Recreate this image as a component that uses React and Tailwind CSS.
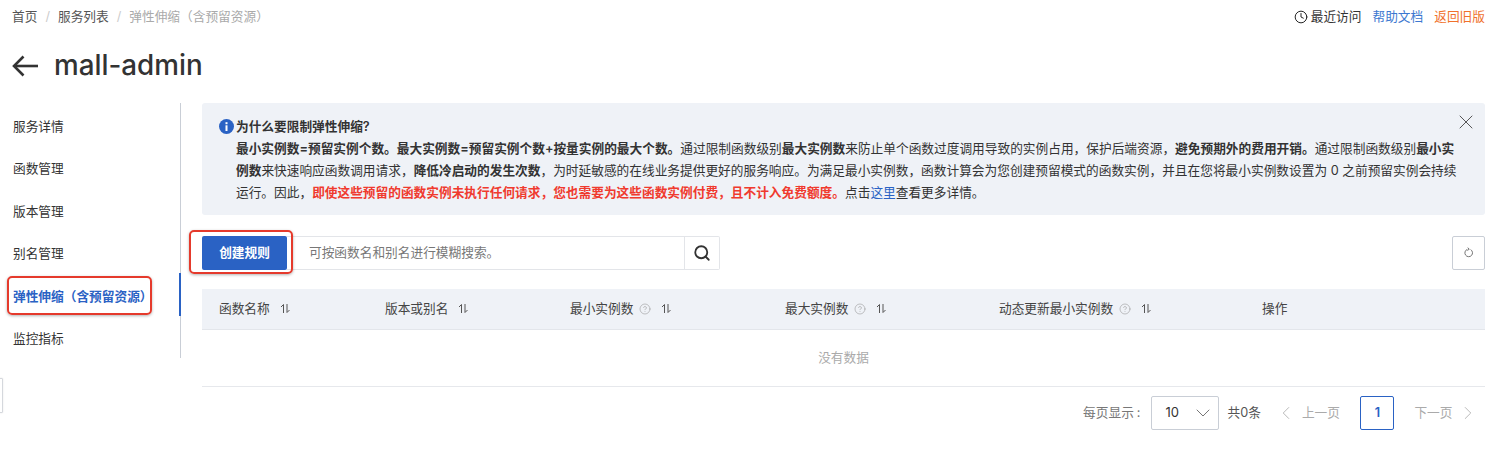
import React from "react";
import { ChevronDown, ChevronLeft, ChevronRight, Clock, Search, X, CircleHelp } from "lucide-react";

function Sort() {
  return (
    <svg width="11" height="11" viewBox="0 0 11 11" fill="none" stroke="#555" strokeWidth="1" className="shrink-0">
      <path d="M3.5 10V1.5L1 4" />
      <path d="M7 1v8.5L9.5 7" />
    </svg>
  );
}

function Refresh() {
  return (
    <svg width="10" height="11" viewBox="0 0 10 11" fill="none" stroke="#666" strokeWidth="0.9" className="-mt-[1px]">
      <path d="M6.6 2.6a3.8 3.8 0 1 1-3.400 -.2" />
      <path d="M3.800 .6 5.200 2.300 3.200 3.400" />
    </svg>
  );
}

function Info() {
  return (
    <svg width="15" height="15" viewBox="0 0 15 15" className="shrink-0">
      <circle cx="7.5" cy="7.5" r="7.5" fill="#2a62c4" />
      <rect x="6.5" y="6.3" width="2" height="5.7" fill="#fff" />
      <rect x="6.5" y="3.2" width="2" height="2" fill="#fff" />
    </svg>
  );
}

function BackArrow() {
  return (
    <svg width="26" height="22" viewBox="0 0 26 22" fill="none" stroke="#333" strokeWidth="2.6" className="shrink-0">
      <path d="M2 11h24" />
      <path d="M11.5 1.500 2 11l9.500 9.500" />
    </svg>
  );
}

const nav = [
  "服务详情",
  "函数管理",
  "版本管理",
  "别名管理",
  "弹性伸缩\uFF08含预留资源\uFF09",
  "监控指标",
];

const cols = [
  { t: "函数名称", sort: true },
  { t: "版本或别名", sort: true },
  { t: "最小实例数", help: true, sort: true },
  { t: "最大实例数", help: true, sort: true },
  { t: "动态更新最小实例数", help: true, sort: true },
  { t: "操作" },
];

export default function App() {
  return (
    <div className="relative h-[470px] w-[1500px] overflow-hidden bg-white text-[12.7px] text-[#333] font-['Inter','Noto_Sans_CJK_SC',sans-serif]">
      {/* top bar */}
      <div className="flex h-[34px] items-center justify-between pl-[12px] pr-[15px]">
        <div className="flex items-center text-[#555]">
          <span>首页</span>
          <span className="mx-[8px] text-[#ccc]">/</span>
          <span>服务列表</span>
          <span className="mx-[8px] text-[#ccc]">/</span>
          <span className="text-[#aaa]">{"弹性伸缩\uFF08含预留资源\uFF09"}</span>
        </div>
        <div className="flex items-center">
          <Clock size={14} strokeWidth={1.7} className="mr-[3px] text-[#222]" />
          <span className="mr-[11px] text-[#333]">最近访问</span>
          <span className="mr-[11px] text-[#3c78d0]">帮助文档</span>
          <span className="text-[#f0712c]">返回旧版</span>
        </div>
      </div>

      {/* title */}
      <div className="flex h-[64px] items-center pl-[12px]">
        <BackArrow />
        <h1 className="ml-[16px] text-[27.8px] font-medium leading-none text-[#333]">mall-admin</h1>
      </div>

      <div className="mt-[5px] flex items-start">
        {/* sidebar */}
        <nav className="w-[181px] shrink-0 border-r border-[#c9ced6]">
          <ul className="flex flex-col">
            {nav.map((n, i) => (
              <li
                key={n}
                className={
                  "relative flex h-[42.5px] items-center pl-[13px] pt-[4px] " +
                  (i === 4 ? "font-semibold text-[#2a62c4]" : "text-[#333]")
                }
              >
                {n}
                {i === 4 && (
                  <>
                    <span className="absolute right-[-1px] top-0 h-[43px] w-[2px] bg-[#2a62c4]" />
                    <span className="absolute left-[6.5px] top-[3px] h-[39px] w-[145px] rounded-[5px] border-[2.5px] border-[#e53a2c] shadow-[0_1px_3px_rgba(0,0,0,0.3)]" />
                  </>
                )}
              </li>
            ))}
          </ul>
        </nav>

        {/* main */}
        <main className="ml-[21px] w-[1283px]">
          {/* alert */}
          <div className="relative h-[112px] rounded-[3px] bg-[#eff2f7] pl-[17px] pt-[13px]">
            <X size={24} strokeWidth={0.9} className="absolute right-[7px] top-[7px] text-[#444]" />
            <div className="flex items-start gap-[2px] leading-[22px]">
              <span className="mt-[3px]"><Info /></span>
              <div className="whitespace-nowrap font-normal text-[#333]">
                <div className="font-semibold">为什么要限制弹性伸缩?</div>
                <div>
                  <b className="font-semibold">最小实例数=预留实例个数。最大实例数=预留实例个数+按量实例的最大个数。</b>
                  通过限制函数级别<b className="font-semibold">最大实例数</b>{"来防止单个函数过度调用导致的实例占用\uFF0C保护后端资源\uFF0C"}
                  <b className="font-semibold">避免预期外的费用开销。</b>通过限制函数级别<b className="font-semibold">最小实</b>
                </div>
                <div>
                  <b className="font-semibold">例数</b>{"来快速响应函数调用请求\uFF0C"}<b className="font-semibold">降低冷启动的发生次数</b>
                  {"\uFF0C为时延敏感的在线业务提供更好的服务响应。为满足最小实例数\uFF0C函数计算会为您创建预留模式的函数实例\uFF0C并且在您将最小实例数设置为 0 之前预留实例会持续"}
                </div>
                <div>
                  {"运行。因此\uFF0C"}<b className="font-semibold text-[#f03a2e]">{"即使这些预留的函数实例未执行任何请求\uFF0C您也需要为这些函数实例付费\uFF0C且不计入免费额度。"}</b>
                  点击<span className="text-[#2a62c4]">这里</span>查看更多详情。
                </div>
              </div>
            </div>
          </div>

          {/* toolbar */}
          <div className="mt-[21px] flex h-[34px] items-stretch justify-between">
            <div className="flex items-stretch">
              <div className="relative">
                <button className="h-full w-[85px] rounded-[2px] bg-[#2a62c4] font-semibold text-white">创建规则</button>
                <span className="absolute -left-[13px] -top-[6px] h-[44px] w-[104px] rounded-[5px] border-[2.5px] border-[#e53a2c] shadow-[0_1px_3px_rgba(0,0,0,0.3)]" />
              </div>
              <div className="flex w-[433px] items-center rounded-r-[2px] border border-l-0 border-[#e3e5e9] pl-[22px] text-[#777]">
                <span className="flex-1">可按函数名和别名进行模糊搜索。</span>
                <span className="flex h-full w-[35px] items-center justify-center border-l border-[#e3e5e9]">
                  <Search size={18} strokeWidth={2.4} className="text-[#333]" />
                </span>
              </div>
            </div>
            <button className="flex w-[33px] items-center justify-center rounded-[2px] border border-[#c9ced6]">
              <Refresh />
            </button>
          </div>

          {/* table */}
          <div className="mt-[19px] grid h-[41px] grid-cols-[183px_185px_215px_214px_263px_1fr] items-center border-b border-[#e3e6eb] bg-[#eff2f7] text-[#444]">
            {cols.map((c, i) => (
              <div key={c.t} className={"flex items-center " + (i === 0 ? "pl-[17px]" : "pl-0")}>
                <span>{c.t}</span>
                {c.help && <CircleHelp size={12} strokeWidth={1} className="ml-[6px] text-[#888]" />}
                {c.sort && <span className="ml-[10px]"><Sort /></span>}
              </div>
            ))}
          </div>
          <div className="flex h-[57px] items-center justify-center border-b border-[#e6e8ec] text-[#aaa]">没有数据</div>

          {/* pagination */}
          <div className="mt-[9px] flex h-[34px] items-center justify-end pr-[6.5px] text-[#777]">
            <span>每页显示<span className="ml-[3px]">:</span></span>
            <div className="ml-[11px] flex h-[34px] w-[68px] items-center justify-between rounded-[2px] border border-[#c9ced6] pl-[13px] pr-[3px] text-[#333]">
              <span className="text-[13px]">10</span>
              <ChevronDown size={24} strokeWidth={0.9} className="text-[#666]" />
            </div>
            <span className="ml-[8px] text-[#555]">共0条</span>
            <ChevronLeft size={22} strokeWidth={0.9} className="ml-[14.5px] text-[#aaa]" />
            <span className="ml-[4.5px] text-[#aaa]">上一页</span>
            <span className="ml-[20.5px] flex h-[34px] w-[34px] items-center justify-center rounded-[2px] border border-[#2a62c4] font-semibold text-[#2a62c4]">1</span>
            <span className="ml-[20px] text-[#aaa]">下一页</span>
            <ChevronRight size={22} strokeWidth={0.9} className="ml-[4px] text-[#aaa]" />
          </div>
        </main>
      </div>

      {/* floating edge tab */}
      <div className="absolute -left-[1px] top-[378px] h-[35px] w-[4px] rounded-r-[1px] border border-[#d5d8dd] bg-white shadow-[0_0_2px_rgba(0,0,0,0.1)]" />
    </div>
  );
}
